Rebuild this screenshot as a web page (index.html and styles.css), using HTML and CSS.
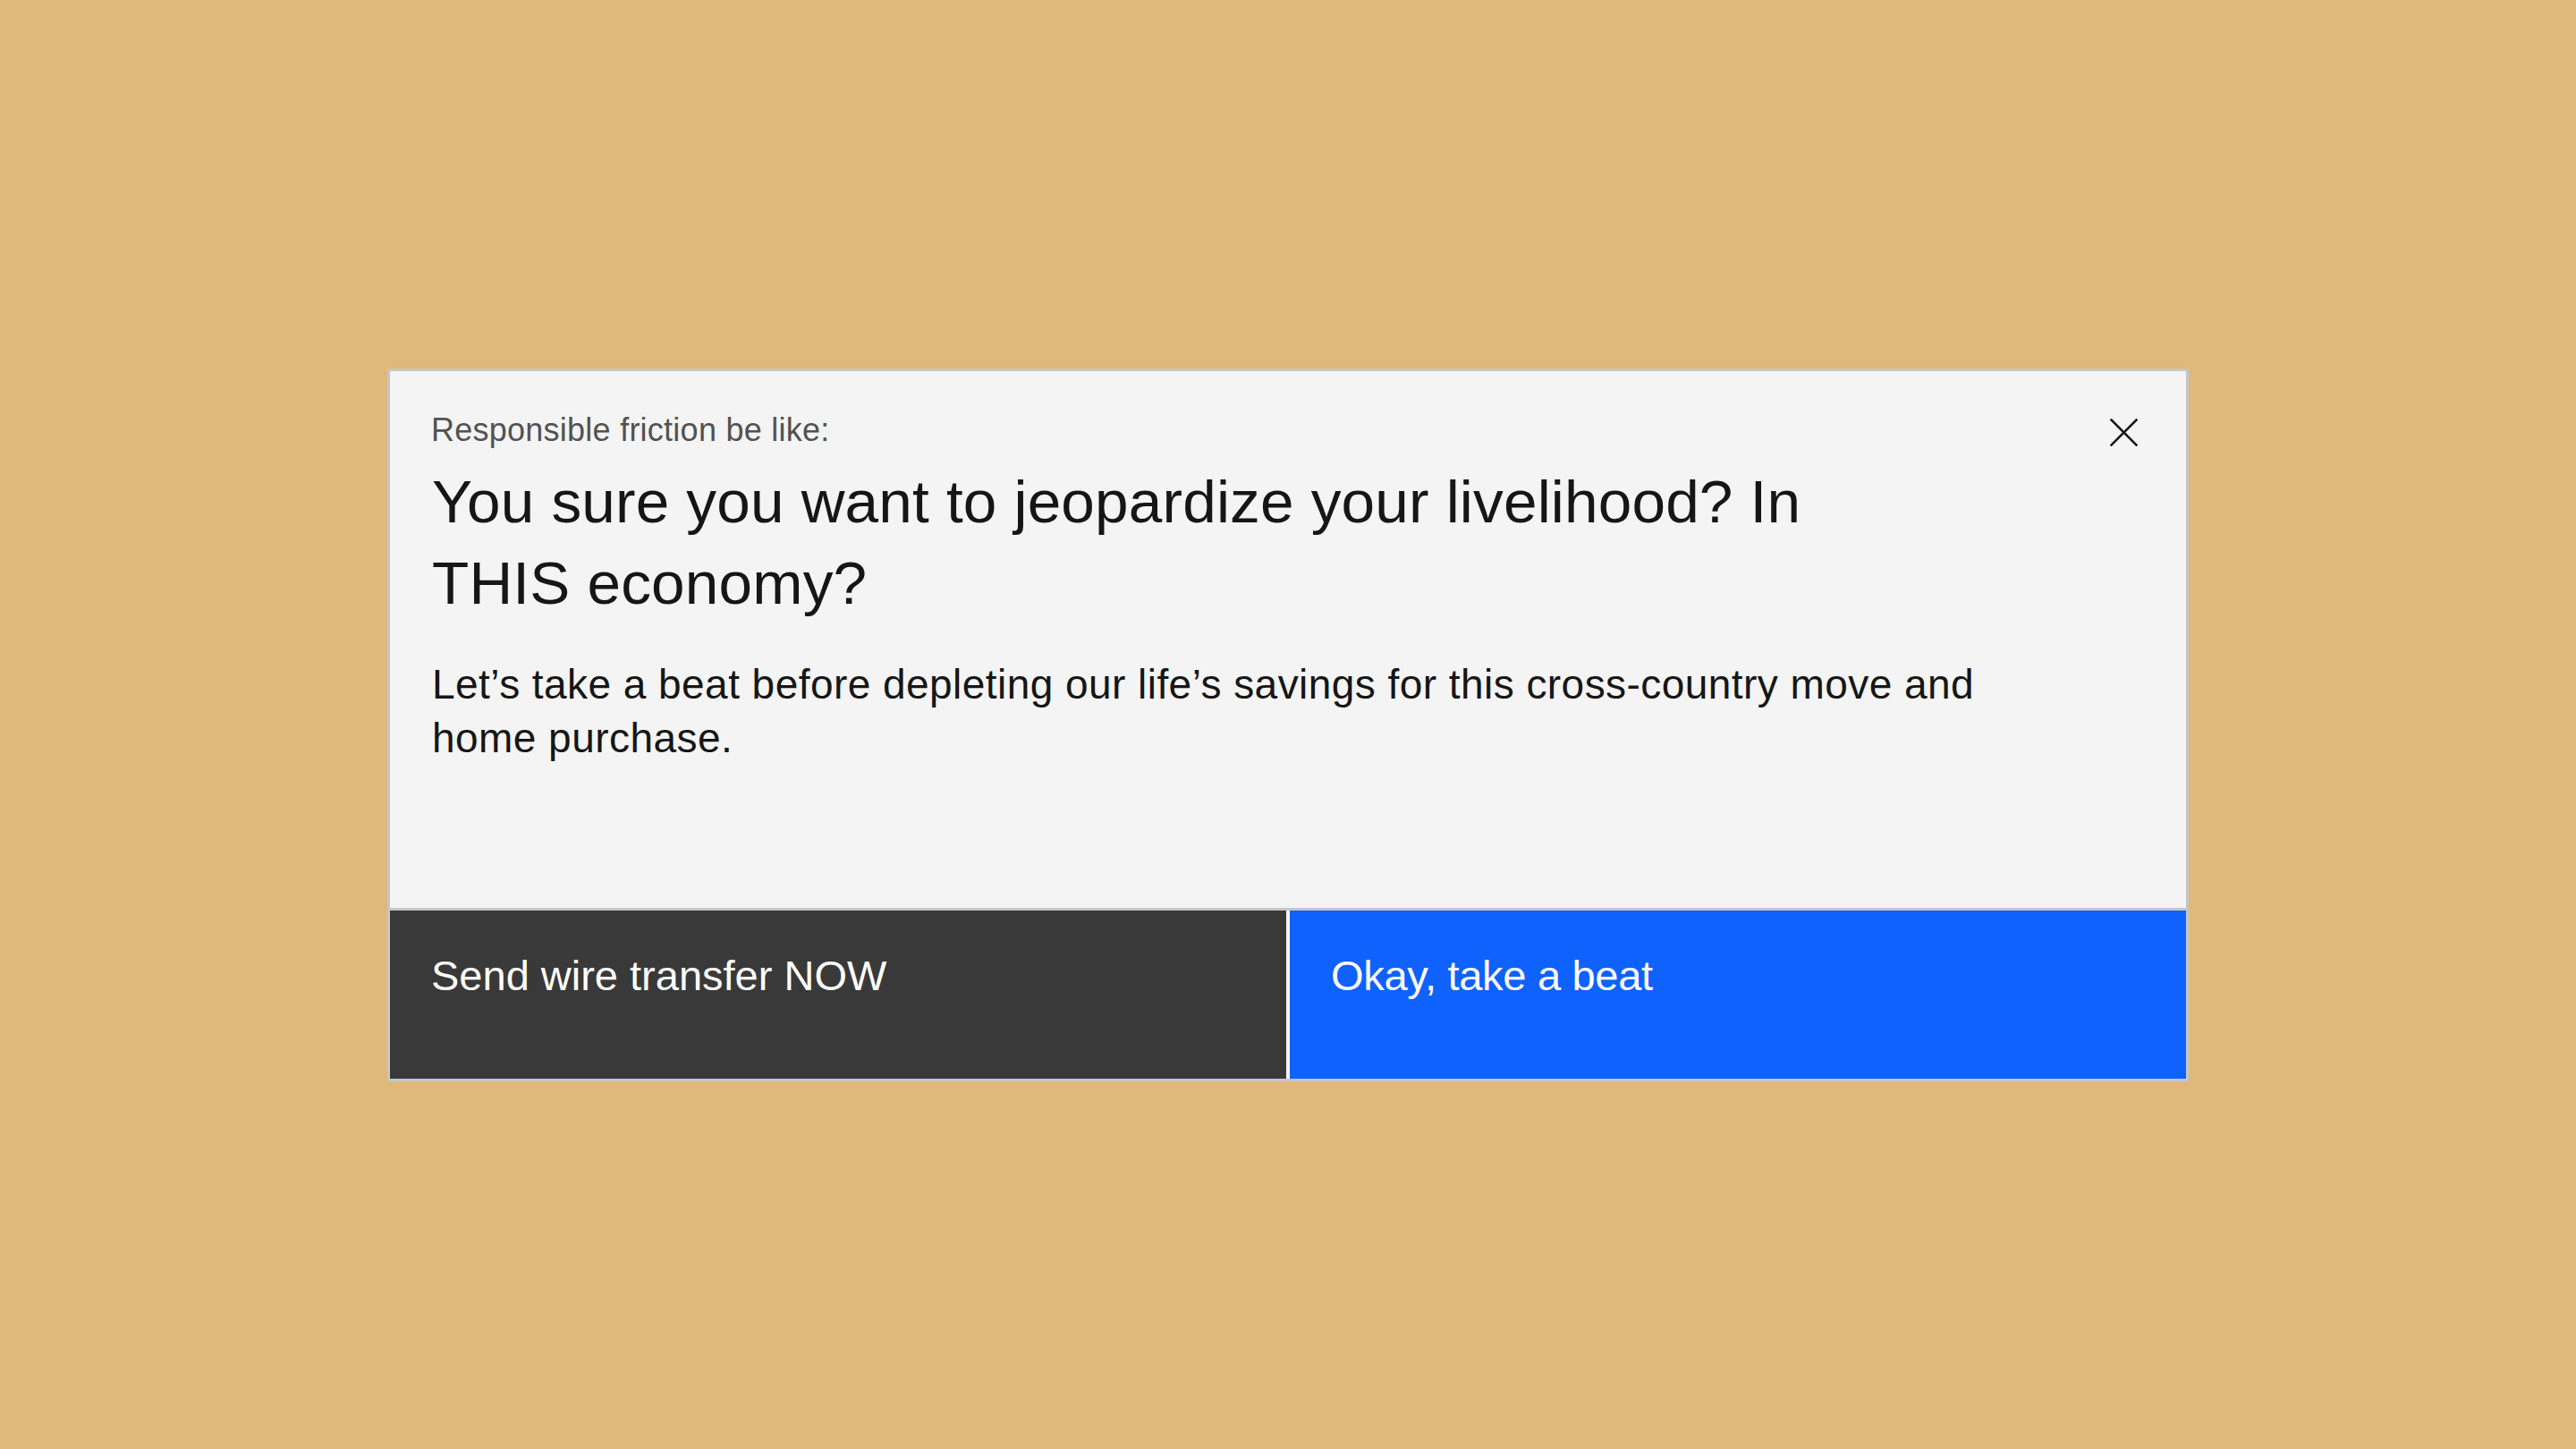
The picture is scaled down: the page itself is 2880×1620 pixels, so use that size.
FILE: index.html
```html
<!DOCTYPE html>
<html lang="en">
<head>
<meta charset="utf-8">
<title>Responsible friction</title>
<link rel="stylesheet" href="styles.css">
</head>
<body>
  <div class="modal" role="dialog" aria-modal="true">
    <div class="modal-content">
      <p class="modal-label">Responsible friction be like:</p>
      <h2 class="modal-heading">You sure you want to jeopardize your livelihood? In THIS economy?</h2>
      <p class="modal-body">Let’s take a beat before depleting our life’s savings for this cross-country move and home purchase.</p>
      <button class="modal-close" type="button" aria-label="Close">
        <svg viewBox="0 0 31 31" width="31" height="31" aria-hidden="true">
          <line x1="1.5" y1="1.5" x2="29.5" y2="29.5"></line>
          <line x1="29.5" y1="1.5" x2="1.5" y2="29.5"></line>
        </svg>
      </button>
    </div>
    <div class="modal-footer">
      <button class="btn btn-secondary" type="button">Send wire transfer NOW</button>
      <button class="btn btn-primary" type="button">Okay, take a beat</button>
    </div>
  </div>
</body>
</html>
```

FILE: styles.css
```css
* {
  box-sizing: border-box;
}

html, body {
  margin: 0;
  padding: 0;
}

body {
  width: 2880px;
  height: 1620px;
  background: #e0b87b;
  display: flex;
  align-items: center;
  justify-content: center;
  font-family: "Liberation Sans", Arial, sans-serif;
  color: #161616;
}

.modal {
  width: 2014px;
  border: 3px solid #c6c6c6;
  background: #f4f4f4;
  display: flex;
  flex-direction: column;
}

.modal-content {
  position: relative;
  box-sizing: content-box;
  height: 558px;
  padding: 42px 47px 0 47px;
  border-bottom: 3px solid #c6c6c6;
}

.modal-label {
  margin: 0 0 0 -1px;
  font-size: 36px;
  line-height: 48px;
  letter-spacing: 0.25px;
  color: #525252;
}

.modal-heading {
  margin: 10px 0 0 0;
  font-size: 67.5px;
  line-height: 91px;
  letter-spacing: 0.18px;
  font-weight: 400;
  color: #161616;
  max-width: 1640px;
}

.modal-body {
  margin: 38px 0 0 0;
  font-size: 46px;
  line-height: 60px;
  letter-spacing: 0.45px;
  color: #161616;
  max-width: 1790px;
}

.modal-close {
  position: absolute;
  top: 53px;
  right: 54px;
  width: 31px;
  height: 31px;
  padding: 0;
  border: 0;
  background: transparent;
  cursor: pointer;
}

.modal-close svg {
  display: block;
}

.modal-close line {
  stroke: #161616;
  stroke-width: 2.6;
  stroke-linecap: square;
}

.modal-footer {
  display: flex;
  gap: 4px;
  background: #f4f4f4;
  height: 188px;
}

.btn {
  flex: 1 1 0;
  border: 0;
  margin: 0;
  padding: 45px 46px 0 46px;
  text-align: left;
  display: flex;
  align-items: flex-start;
  font-family: "Liberation Sans", Arial, sans-serif;
  font-size: 47px;
  line-height: 56px;
  color: #ffffff;
  cursor: pointer;
}

.btn-secondary {
  background: #393939;
}

.btn-primary {
  background: #0f62fe;
  letter-spacing: -0.3px;
}
```
